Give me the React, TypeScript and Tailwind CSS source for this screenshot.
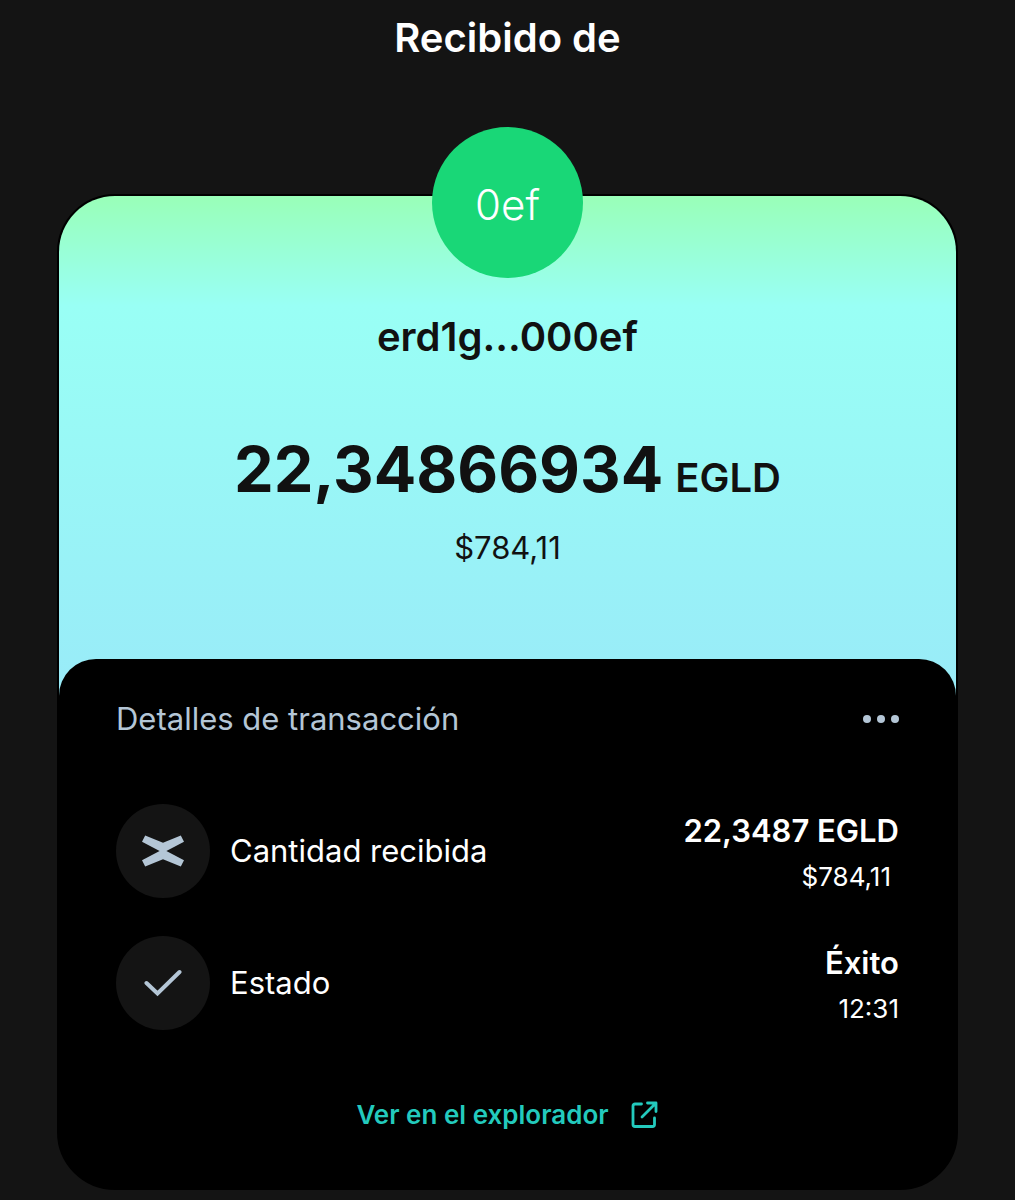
import React from "react";

const transaction = {
  shortName: "0ef",
  address: "erd1g...000ef",
  amount: "22,34866934",
  roundedAmount: "22,3487",
  token: "EGLD",
  fiat: "$784,11",
  status: "Éxito",
  time: "12:31",
};

function TokenIcon() {
  return (
    <svg viewBox="0 0 42 32" className="h-8 w-[42px]" fill="#b4c6d6" aria-hidden="true">
      <path d="M3.2 0.4 21 7.7 38.8 0.4 42 6.8 24.4 16 42 25.2 38.8 31.6 21 24.3 3.2 31.6 0 25.2 17.6 16 0 6.8Z" />
    </svg>
  );
}

function CheckIcon() {
  return (
    <svg viewBox="0 0 38 28" className="h-7 w-[38px]" fill="none" stroke="#b4c6d6" strokeWidth="4" strokeLinecap="round" aria-hidden="true">
      <path d="M2.5 14 13.5 24.5 35.5 3" />
    </svg>
  );
}

function ExternalIcon() {
  return (
    <svg viewBox="0 0 28 28" className="h-7 w-7" fill="none" stroke="currentColor" strokeWidth="2.8" strokeLinecap="round" strokeLinejoin="round" aria-hidden="true">
      <path d="M10.5 3H4A2 2 0 0 0 2 5V23.500a2 2 0 0 0 2 2H21.500a2 2 0 0 0 2-2V17" />
      <path d="M11 16 25 2M16.500 2H25V10.500" />
    </svg>
  );
}

interface DetailRowProps {
  icon: React.ReactNode;
  label: string;
  value: string;
  note: string;
  noteClassName?: string;
}

function DetailRow({ icon, label, value, note, noteClassName }: DetailRowProps) {
  return (
    <div className="flex items-center justify-between">
      <dt className="flex items-center gap-5 text-[31px] leading-10">
        <span className="flex size-[94px] items-center justify-center rounded-full bg-[#141414]">
          {icon}
        </span>
        {label}
      </dt>
      <dd className="pt-[6px] text-right">
        <p className="text-[31px] leading-10 font-semibold">{value}</p>
        <p className={`mt-[6px] text-[26px] leading-10 ${noteClassName || ""}`}>{note}</p>
      </dd>
    </div>
  );
}

export default function App() {
  return (
    <main className="min-h-screen bg-[#141414] px-[57px] pb-[10px] font-['Inter',sans-serif] text-white">
      <h1 className="pt-3 text-center text-[40px] leading-[52px] font-semibold">Recibido de</h1>

      <article className="mt-[130px] rounded-[58px] border-2 border-black bg-black">
        <section className="rounded-t-[56px] bg-[linear-gradient(to_bottom,#99ffb8_0px,#99fff5_110px,#99ebf8_500px)] pb-[37px] text-center text-[#111]">
          <div className="mx-auto flex size-[151px] -translate-y-[69px] items-center justify-center rounded-full bg-[#19d777] pt-1 text-[42px] font-light text-white">
            {transaction.shortName}
          </div>
          <h2 className="-mt-[36px] text-[40px] leading-[52px] font-semibold">{transaction.address}</h2>
          <p className="mt-[66px] flex items-baseline justify-center gap-3 text-[63px] leading-20 font-bold">
            {transaction.amount}
            <span className="text-[40px] font-semibold">{transaction.token}</span>
          </p>
          <p className="mt-[10px] pb-[91px] text-[31px] leading-10">{transaction.fiat}</p>
        </section>

        <section className="-mt-[37px] rounded-t-[37px] rounded-b-[56px] bg-black px-[57px] pt-10 pb-[53px]">
          <header className="flex items-center justify-between text-[#b4c6d6]">
            <h3 className="text-[31px] leading-10">Detalles de transacción</h3>
            <button type="button" aria-label="Más opciones" className="flex gap-[6px] py-2">
              <span className="size-2 rounded-full bg-current" />
              <span className="size-2 rounded-full bg-current" />
              <span className="size-2 rounded-full bg-current" />
            </button>
          </header>

          <dl className="mt-[65px] flex flex-col gap-[38px]">
            <DetailRow
              icon={<TokenIcon />}
              label="Cantidad recibida"
              value={`${transaction.roundedAmount} ${transaction.token}`}
              note={transaction.fiat}
              noteClassName="pr-2"
            />
            <DetailRow icon={<CheckIcon />} label="Estado" value={transaction.status} note={transaction.time} />
          </dl>

          <a href="#explorador" className="mx-auto mt-[65px] flex w-fit items-center gap-[22px] text-[26px] leading-10 font-semibold text-[#23cabd]">
            Ver en el explorador
            <ExternalIcon />
          </a>
        </section>
      </article>
    </main>
  );
}
